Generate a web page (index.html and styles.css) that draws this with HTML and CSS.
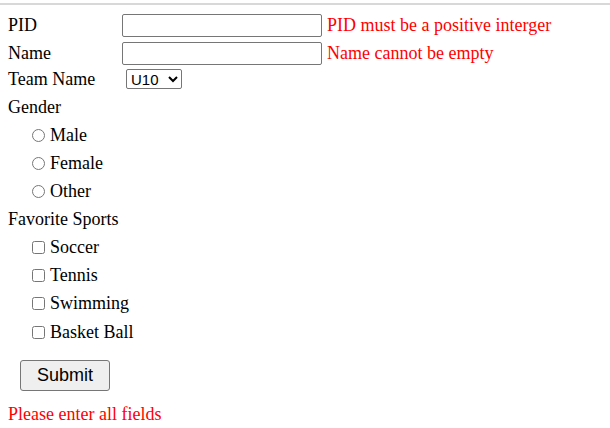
FILE: index.html
```
<!DOCTYPE html>
<html>
<head>
<meta charset="utf-8">
<link rel="stylesheet" href="styles.css">
</head>
<body>
<div class="topline"></div>
<form class="form">
  <div class="row field-row">
    <label class="label" for="pid">PID</label>
    <input class="text-input" id="pid" type="text">
    <span class="error inline-error">PID must be a positive interger</span>
  </div>
  <div class="row field-row">
    <label class="label" for="name">Name</label>
    <input class="text-input" id="name" type="text">
    <span class="error inline-error">Name cannot be empty</span>
  </div>
  <div class="row team-row">
    <label class="label" for="team">Team Name</label>
    <select class="select" id="team">
      <option>U10</option>
    </select>
  </div>
  <div class="row group-title first-group">Gender</div>
  <div class="option-list">
    <label class="row option"><input class="radio" type="radio" name="gender">Male</label>
    <label class="row option"><input class="radio" type="radio" name="gender">Female</label>
    <label class="row option"><input class="radio" type="radio" name="gender">Other</label>
  </div>
  <div class="row group-title">Favorite Sports</div>
  <div class="option-list">
    <label class="row option sport"><input class="check" type="checkbox">Soccer</label>
    <label class="row option sport"><input class="check" type="checkbox">Tennis</label>
    <label class="row option sport"><input class="check" type="checkbox">Swimming</label>
    <label class="row option sport"><input class="check" type="checkbox">Basket Ball</label>
  </div>
  <div class="actions">
    <button class="submit" type="button">Submit</button>
  </div>
  <div class="error form-error">Please enter all fields</div>
</form>
</body>
</html>
```
FILE: styles.css
```
html, body {
  margin: 0;
  padding: 0;
  background: #fff;
}
body {
  font-family: "Liberation Serif", "Times New Roman", serif;
  font-size: 18px;
  color: #000;
}
.topline {
  margin-top: 3px;
  height: 2px;
  background: #d8d8d8;
}
.form {
  padding: 6px 8px 0 8px;
  display: flex;
  flex-direction: column;
}
.row {
  display: flex;
  align-items: center;
}
.field-row {
  height: 28px;
}
.team-row {
  height: 24px;
}
.label {
  width: 114px;
  flex: none;
}
.text-input {
  box-sizing: border-box;
  width: 200px;
  height: 23px;
  margin: 0;
  border: 1px solid #767676;
  border-radius: 2px;
  padding: 1px 2px;
  font-family: Arial, "Liberation Sans", sans-serif;
  font-size: 13.33px;
}
.inline-error {
  margin-left: 5px;
}
.error {
  color: #ff0000;
}
.select {
  box-sizing: border-box;
  width: 56px;
  height: 20px;
  margin: 0 0 0 4px;
  font-family: Arial, "Liberation Sans", sans-serif;
  font-size: 15px;
  border: 1px solid #767676;
  border-radius: 2px;
  background: #fff;
  color: #000;
}
.group-title {
  height: 28px;
}
.first-group {
  margin-top: 2px;
}
.option-list {
  display: flex;
  flex-direction: column;
  padding-left: 24px;
}
.option {
  height: 28px;
}
.sport {
  height: 28.4px;
}
.radio, .check {
  width: 13px;
  height: 13px;
  margin: 0 5px 0 0;
}
.actions {
  margin-top: 13px;
  padding-left: 12px;
  display: flex;
}
.submit {
  box-sizing: border-box;
  width: 90px;
  height: 31px;
  font-family: Arial, "Liberation Sans", sans-serif;
  font-size: 18px;
  background: #efefef;
  border: 1px solid #767676;
  border-radius: 3px;
  color: #000;
  padding: 0;
}
.form-error {
  margin-top: 13px;
}
```
